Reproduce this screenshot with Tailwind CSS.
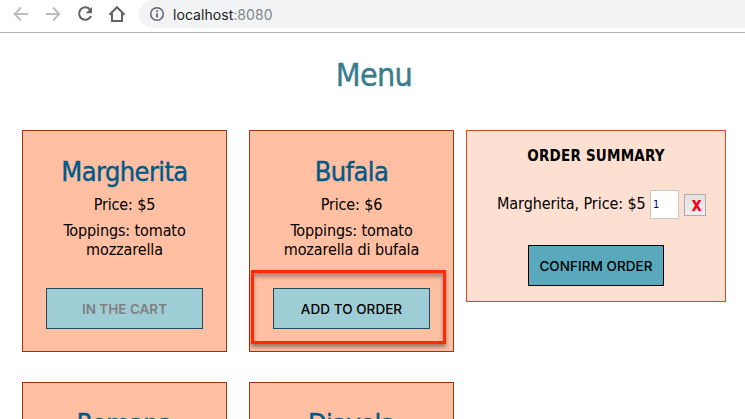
<!DOCTYPE html>
<html lang="en">
<head>
<meta charset="utf-8">
<title>Menu</title>
<script src="https://cdn.jsdelivr.net/npm/@tailwindcss/browser@4"></script>
</head>
<body class="h-[419px] w-[745px] overflow-hidden bg-white text-base tracking-[-0.120px] text-black font-['DejaVu_Sans_Condensed','DejaVu_Sans',sans-serif] [font-stretch:condensed]">
<header class="flex h-[33px] items-start border-b border-[#b2b2b2] pl-[12px] text-[#5f6368]">
  <div class="flex h-[28px] items-center gap-[14px]">
    <svg class="size-[18px] text-[#babcbe]" viewBox="0 0 18 18" fill="none" stroke="currentColor" stroke-width="1.9"><path d="M16 9H3M9 2.500 2.700 9 9 15.500"/></svg>
    <svg class="size-[18px] text-[#babcbe]" viewBox="0 0 18 18" fill="none" stroke="currentColor" stroke-width="1.900"><path d="M2 9h13M9 2.500 15.300 9 9 15.500"/></svg>
    <svg class="size-[18px]" viewBox="0 0 18 18"><path d="M14 4.500A6.200 6.200 0 1 0 15 11" fill="none" stroke="currentColor" stroke-width="2"/><path d="M16 2v6.300H9.700z" fill="currentColor"/></svg>
    <svg class="size-[18px]" viewBox="0 0 18 18" fill="none" stroke="currentColor" stroke-width="2"><path d="M1.500 9.700 9 2.200l7.500 7.500M4 8v8h10V8"/></svg>
  </div>
  <div class="ml-[13px] flex h-[28px] flex-1 items-center rounded-l-full bg-[#f1f3f4] pl-[10px]">
    <svg class="size-[16px]" viewBox="0 0 16 16" fill="none" stroke="currentColor"><circle cx="8" cy="8" r="6.300" stroke-width="1.500"/><path d="M8 7.200v4.300M8 4.300v1.600" stroke-width="1.700"/></svg>
    <span class="ml-[8px] font-[Inter,sans-serif] text-[14px] tracking-[0.05px] text-[#202124]">localhost<span class="text-[#80868b]">:8080</span></span>
  </div>
</header>
<main class="h-[386px] overflow-hidden">
  <h1 class="mt-[22px] h-[40px] pl-[3px] text-center text-[32px] leading-[40px] tracking-[-0.700px] text-[#3a7c8c] [-webkit-text-stroke:0.4px_currentColor]">Menu</h1>
  <div class="mt-[35px] flex items-start pl-[22px]">
    <section class="grid grid-cols-[205px_205px] gap-x-[22px] gap-y-[30px] text-center">
      <article class="h-[222px] border border-[#a0350f] bg-[#ffbfa3] px-[23px] pt-[22px]">
        <h2 class="h-[36px] text-[27px] leading-[37px] tracking-[-0.600px] text-[#005a87] [-webkit-text-stroke:0.4px_currentColor]">Margherita</h2>
        <p class="mt-[6px] leading-[19px]">Price: $5</p>
        <p class="mt-[7px] leading-[19px]">Toppings: tomato<br>mozzarella</p>
        <button class="mt-[29px] block h-[41px] w-[157px] border border-[#24495a] bg-[#9fcdd6] pt-px font-[Inter,sans-serif] text-[13.500px] tracking-normal font-semibold text-[#7f8080]">IN THE CART</button>
      </article>
      <article class="relative h-[222px] border border-[#a0350f] bg-[#ffbfa3] px-[23px] pt-[22px]">
        <h2 class="h-[36px] text-[27px] leading-[37px] tracking-[-0.600px] text-[#005a87] [-webkit-text-stroke:0.4px_currentColor]">Bufala</h2>
        <p class="mt-[6px] leading-[19px]">Price: $6</p>
        <p class="mt-[7px] leading-[19px]">Toppings: tomato<br><span class="whitespace-nowrap">mozarella di bufala</span></p>
        <button class="mt-[29px] block h-[41px] w-[157px] border border-[#24495a] bg-[#9fcdd6] pt-px font-[Inter,sans-serif] text-[13.500px] tracking-[0.050px] font-medium">ADD TO ORDER</button>
        <div class="absolute top-[139px] left-[1px] h-[74px] w-[195px] border-3 border-[#ff2a05] shadow-[0_3px_4px_rgba(0,0,0,0.4),inset_0_4px_4px_rgba(0,0,0,0.3)]"></div>
      </article>
      <article class="h-[222px] border border-[#a0350f] bg-[#ffbfa3] px-[23px] pt-[22px]">
        <h2 class="h-[36px] text-[27px] leading-[37px] tracking-[-0.600px] text-[#005a87] [-webkit-text-stroke:0.4px_currentColor]">Romana</h2>
      </article>
      <article class="h-[222px] border border-[#a0350f] bg-[#ffbfa3] px-[23px] pt-[22px]">
        <h2 class="h-[36px] text-[27px] leading-[37px] tracking-[-0.600px] text-[#005a87] [-webkit-text-stroke:0.4px_currentColor]">Diavola</h2>
      </article>
    </section>
    <aside class="ml-[12px] h-[172px] w-[260px] border border-[#d04a20] bg-[#fee0d2]">
      <h3 class="mt-[15px] text-center text-[15px] leading-[20px] tracking-[0.200px] font-bold">ORDER SUMMARY</h3>
      <div class="mt-[24px] flex h-[29px] items-center pl-[30px]">
        <span class="w-[148px] pb-[2px] leading-[19px] tracking-[-0.080px] whitespace-nowrap">Margherita, Price: $5</span>
        <input class="ml-[5px] h-[29px] w-[29px] border border-[#c8c8c8] bg-white pl-[2px] text-[11px] text-[#000080]" value="1">
        <button class="ml-[5px] flex h-[22px] w-[22px] items-center justify-center border border-[#adadad] bg-linear-to-b from-[#e2e2e2] to-[#efefef] pl-[4px] text-[16px] leading-[20px] font-bold text-[#ff0018]"><span class="inline-block scale-x-110 scale-y-120">x</span></button>
      </div>
      <button class="mt-[26px] ml-[61px] block h-[41px] w-[136px] border border-black bg-[#59a8bc] pt-px font-[Inter,sans-serif] text-[13.500px] tracking-[0.050px] font-medium whitespace-nowrap">CONFIRM ORDER</button>
    </aside>
  </div>
</main>
</body>
</html>
